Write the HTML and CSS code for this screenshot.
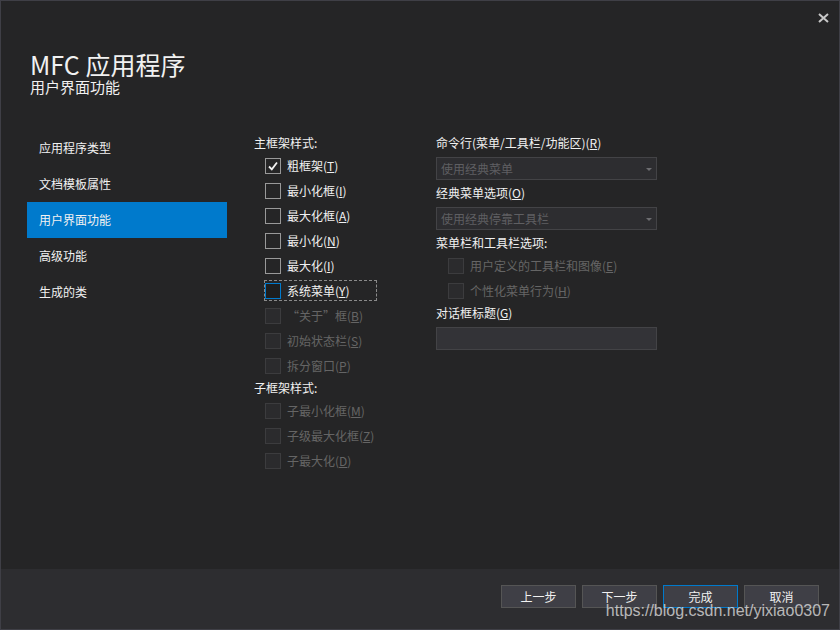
FILE: index.html
```html
<!DOCTYPE html>
<html lang="zh-CN">
<head>
    <meta charset="UTF-8">
    <title>MFC 应用程序</title>
    <link rel="stylesheet" href="styles.css">
</head>
<body>
    <div class="window">
        <div class="titlebar">
            <svg class="close" width="11" height="10" viewBox="0 0 11 10">
                <path d="M1 1 L10 9 M10 1 L1 9" stroke="#c8c8c8" stroke-width="2" fill="none"/>
            </svg>
        </div>
        <div class="heading">
            <div class="title">MFC 应用程序</div>
            <div class="subtitle">用户界面功能</div>
        </div>

        <div class="main">
            <ul class="nav">
                <li>应用程序类型</li>
                <li>文档模板属性</li>
                <li class="active">用户界面功能</li>
                <li>高级功能</li>
                <li>生成的类</li>
            </ul>

            <div class="col-mid">
                <div class="label">主框架样式:</div>
                <div class="check"><span class="box checked"><svg width="14" height="14" viewBox="0 0 14 14"><path d="M3 7.5 L5.8 10.3 L11 3.5" stroke="#f1f1f1" stroke-width="1.8" fill="none"/></svg></span>粗框架(<u>T</u>)</div>
                <div class="check"><span class="box"></span>最小化框(<u>I</u>)</div>
                <div class="check"><span class="box"></span>最大化框(<u>A</u>)</div>
                <div class="check"><span class="box"></span>最小化(<u>N</u>)</div>
                <div class="check"><span class="box"></span>最大化(<u>I</u>)</div>
                <div class="check"><span class="focus"><span class="box focused"></span>系统菜单(<u>Y</u>)</span></div>
                <div class="check disabled"><span class="box"></span>“关于”框(<u>B</u>)</div>
                <div class="check disabled"><span class="box"></span>初始状态栏(<u>S</u>)</div>
                <div class="check disabled"><span class="box"></span>拆分窗口(<u>P</u>)</div>
                <div class="label">子框架样式:</div>
                <div class="check disabled"><span class="box"></span>子最小化框(<u>M</u>)</div>
                <div class="check disabled"><span class="box"></span>子级最大化框(<u>Z</u>)</div>
                <div class="check disabled"><span class="box"></span>子最大化(<u>D</u>)</div>
            </div>

            <div class="col-right">
                <div class="label">命令行(菜单/工具栏/功能区)(<u>R</u>)</div>
                <div class="combo">使用经典菜单<span class="arrow"></span></div>
                <div class="label">经典菜单选项(<u>O</u>)</div>
                <div class="combo">使用经典停靠工具栏<span class="arrow"></span></div>
                <div class="label">菜单栏和工具栏选项:</div>
                <div class="check disabled sub"><span class="box"></span>用户定义的工具栏和图像(<u>E</u>)</div>
                <div class="check disabled sub"><span class="box"></span>个性化菜单行为(<u>H</u>)</div>
                <div class="label">对话框标题(<u>G</u>)</div>
                <div class="textbox"></div>
            </div>
        </div>

        <div class="footer">
            <button class="btn">上一步</button>
            <button class="btn">下一步</button>
            <button class="btn primary">完成</button>
            <button class="btn">取消</button>
        </div>

        <div class="watermark">https://blog.csdn.net/yixiao0307</div>
    </div>
</body>
</html>
```

FILE: styles.css
```css
* {
    box-sizing: border-box;
}

html,
body {
    margin: 0;
    padding: 0;
    background-color: #252526;
}

.window {
    position: relative;
    width: 840px;
    height: 630px;
    border: 1px solid #3f3f46;
    background-color: #252526;
    color: #f1f1f1;
    font-family: "Noto Sans CJK SC", "Microsoft YaHei", sans-serif;
    font-size: 12px;
    display: flex;
    flex-direction: column;
    overflow: hidden;
}

.titlebar {
    height: 34px;
    display: flex;
    justify-content: flex-end;
    padding: 12px 10px 0 0;
}

.close {
    display: block;
}

.heading {
    height: 95px;
    padding: 16px 0 0 29px;
}

.title {
    font-size: 25px;
    line-height: 27px;
    color: #f1f1f1;
}

.subtitle {
    font-size: 15px;
    line-height: 18px;
}

.main {
    flex: 1;
    display: flex;
}

.nav {
    list-style: none;
    margin: 0 0 0 26px;
    padding: 0;
    width: 200px;
}

.nav li {
    height: 36px;
    line-height: 36px;
    padding-left: 12px;
}

.nav li.active {
    background-color: #007acc;
}

.col-mid {
    margin-left: 27px;
    width: 182px;
    padding-top: 3px;
}

.col-right {
    width: 221px;
    padding-top: 3px;
}

.label {
    height: 20px;
    line-height: 20px;
}

.check {
    height: 25px;
    display: flex;
    align-items: center;
    padding-left: 11px;
}

.check.sub {
    padding-left: 12px;
}

.box {
    width: 16px;
    height: 16px;
    border: 1px solid #999999;
    margin-right: 6px;
    display: flex;
    align-items: center;
    justify-content: center;
    flex-shrink: 0;
}

.box.focused {
    border-color: #007acc;
    background-color: #1e1e1e;
}

.focus {
    display: flex;
    align-items: center;
    width: 111px;
    height: 19px;
    outline: 1px dashed #8a8a8a;
}

.disabled {
    color: #656565;
}

.disabled .box {
    border-color: #3c3c3e;
    background-color: #2b2b2d;
}

.combo {
    position: relative;
    height: 23px;
    line-height: 21px;
    margin: 4px 0 3px;
    padding-left: 4px;
    border: 1px solid #434346;
    background-color: #2d2d30;
    color: #5f5f62;
}

.arrow {
    position: absolute;
    right: 4px;
    top: 10px;
    border-left: 3px solid transparent;
    border-right: 3px solid transparent;
    border-top: 3px solid #6d6d70;
}

.textbox {
    height: 23px;
    margin-top: 4px;
    border: 1px solid #434346;
    background-color: #333337;
}

.footer {
    height: 60px;
    background-color: #2d2d30;
    display: flex;
    justify-content: flex-end;
    align-items: flex-start;
    gap: 6px;
    padding: 16px 20px 0 0;
}

.btn {
    width: 75px;
    height: 23px;
    padding: 0;
    border: 1px solid #555555;
    background-color: #3f3f46;
    color: #f1f1f1;
    font-family: "Noto Sans CJK SC", "Microsoft YaHei", sans-serif;
    font-size: 12px;
}

.btn.primary {
    border-color: #007acc;
}

.watermark {
    position: absolute;
    right: 9px;
    bottom: 9px;
    font-family: "Liberation Sans", Arial, sans-serif;
    font-size: 16px;
    color: rgba(230, 230, 230, 0.75);
    pointer-events: none;
}
```
